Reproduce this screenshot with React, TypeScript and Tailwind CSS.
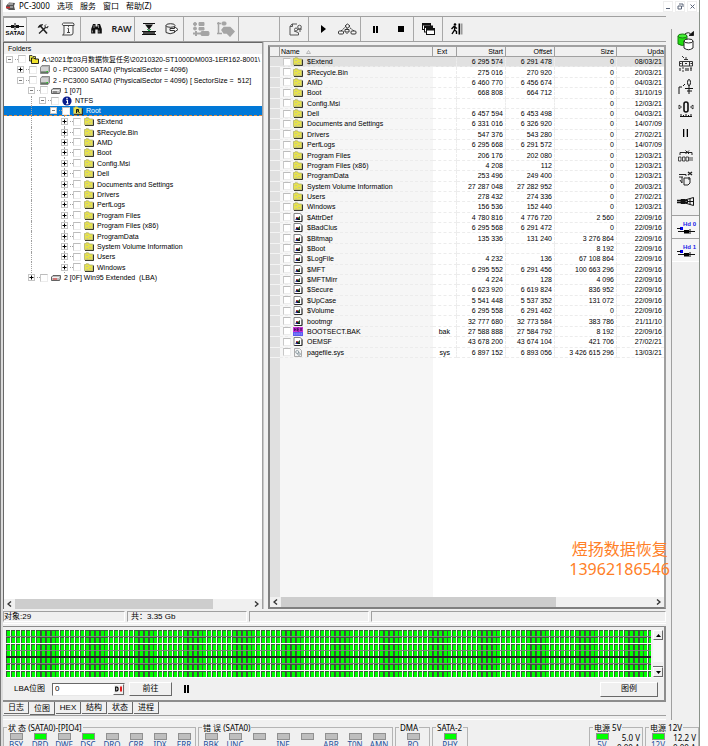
import React from "react";

const UI = "font-['Liberation_Sans','Noto_Sans_CJK_SC',sans-serif]";
const NOTO = "font-['Noto_Sans','Noto_Sans_CJK_SC',sans-serif]";

function FolderIcon({ root = false }: { root?: boolean }) {
  return (
    <svg width="10" height="9" viewBox="0 0 10 9" className="block flex-none">
      <path d="M1 8.500H9.500V2.500" fill="none" stroke="#222" strokeWidth="1" />
      <path d="M.5 7.800V1.500H1.500L2 .8H4.500L5.500 2H8.700V7.800Z" fill="#e6e24e" stroke="#a6a66a" strokeWidth=".7" />
      {root ? (
        <path d="M3.500 7V3.500H5.500V5H3.500M5 5L6.500 7" fill="none" stroke="#111" strokeWidth="1" />
      ) : (
        <path d="M2 3.500H4M5 5.500H7M2.500 6.500H4" stroke="#c9c58a" strokeWidth="1" />
      )}
    </svg>
  );
}

function FoldersIcon() {
  return (
    <svg width="10" height="9" viewBox="0 0 10 9" className="block flex-none">
      <path d="M.5 6V.5H3L4 1.500H6.500V6Z" fill="#e6e24e" stroke="#222" strokeWidth=".8" />
      <path d="M2.500 8.500V3H5L6 4H9.500V8.500Z" fill="#f0e22e" stroke="#111" strokeWidth=".9" />
    </svg>
  );
}

function DriveIcon() {
  return (
    <svg width="10" height="9" viewBox="0 0 10 9" className="block flex-none">
      <path d="M2 .5H9.500V6.500L8 8.500H.5V2.500Z" fill="#b4b4b4" stroke="#666" strokeWidth=".7" />
      <path d="M1 3H8M1 5H8" stroke="#f2f2f2" strokeWidth="1" />
      <path d="M1 7.200H8" stroke="#3c5a3c" strokeWidth="1" />
      <path d="M6.500 6.500h1.500" stroke="#1fd01f" strokeWidth="1" />
    </svg>
  );
}

function VolumeIcon({ red = false }: { red?: boolean }) {
  return (
    <svg width="10" height="9" viewBox="0 0 10 9" className="block flex-none">
      <path d="M2 2.500H9.500V5.500L8.500 7.500H.5V4Z" fill="#bdbdbd" stroke="#444" strokeWidth=".8" />
      <path d="M1 4.500H8" stroke="#fff" strokeWidth=".8" />
      <path d="M2 6H6" stroke={red ? "#e03030" : "#555"} strokeWidth="1" />
    </svg>
  );
}

function InfoIcon() {
  return (
    <svg width="10" height="10" viewBox="0 0 10 10" className="block flex-none">
      <circle cx="5" cy="5" r="4.600" fill="#0a1c8c" />
      <path d="M4 4.300H5.500V7.500M4 7.700H6.500" stroke="#fff" strokeWidth="1.100" fill="none" />
      <rect x="4.300" y="1.800" width="1.400" height="1.300" fill="#fff" />
    </svg>
  );
}

function FileIcon({ kind }: { kind: string }) {
  if (kind === "hex")
    return (
      <svg width="10" height="9" viewBox="0 0 10 9" className="block flex-none">
        <rect width="10" height="5" fill="#c830d8" />
        <rect y="5" width="10" height="4" fill="#5a5af0" />
        <path d="M1.500 1V4M3 1V4M1.500 2.500H3M6 1H4.500V4H6M4.500 2.500H6M7 1L9 4M9 1L7 4" stroke="#3a0850" strokeWidth=".7" fill="none" />
        <path d="M1 7H9" stroke="#b8b8ff" strokeWidth=".8" strokeDasharray="1.500 .7" />
      </svg>
    );
  if (kind === "sys")
    return (
      <svg width="10" height="9" viewBox="0 0 10 9" className="block flex-none">
        <path d="M1.500 .5H6.500L8.500 2.500V8.500H1.500Z" fill="#f4f4f4" stroke="#999" strokeWidth=".8" />
        <circle cx="4.200" cy="4" r="1.500" fill="none" stroke="#8a9aa0" strokeWidth=".9" />
        <circle cx="6" cy="6" r="1.300" fill="none" stroke="#8a9aa0" strokeWidth=".9" />
      </svg>
    );
  return (
    <svg width="10" height="9" viewBox="0 0 10 9" className="block flex-none">
      <path d="M1 .5H7L9 2.200V8.500H1Z" fill="#fff" stroke="#777" strokeWidth=".9" />
      <path d="M9 2.500V8.500H1.500" fill="none" stroke="#222" strokeWidth=".9" />
      <path d="M2.500 6.800L3.500 4L5 5L7 3V7H2.500Z" fill="#111" />
      <rect x="3.500" y="4" width="1.300" height="1.300" fill="#d02020" />
      <rect x="5.500" y="4.500" width="1.300" height="1.300" fill="#20a040" />
      <rect x="3" y="5.700" width="1.300" height="1.200" fill="#2030d0" />
    </svg>
  );
}

type Node = { level: number; text: string; open?: boolean; icon: React.ReactNode; selected?: boolean; rails?: number[] };

const folders = [
  "$Extend", "$Recycle.Bin", "AMD", "Boot", "Config.Msi", "Dell", "Documents and Settings", "Drivers", "PerfLogs",
  "Program Files", "Program Files (x86)", "ProgramData", "System Volume Information", "Users", "Windows",
];

const nodes: Node[] = [
  { level: 0, text: "A:\\2021年03月数据恢复任务\\20210320-ST1000DM003-1ER162-8001\\", open: true, icon: <FoldersIcon /> },
  { level: 1, text: "0 - PC3000 SATA0 (PhysicalSector = 4096)", icon: <DriveIcon /> },
  { level: 1, text: "2 - PC3000 SATA0 (PhysicalSector = 4096) [ SectorSize =  512]", open: true, icon: <DriveIcon /> },
  { level: 2, text: "1 [07]", open: true, icon: <VolumeIcon /> },
  { level: 3, text: "NTFS", open: true, icon: <InfoIcon />, rails: [2] },
  { level: 4, text: "Root", open: true, icon: <FolderIcon root />, selected: true, rails: [2] },
  ...folders.map((text) => ({ level: 5, text, icon: <FolderIcon />, rails: [2, 5] })),
  { level: 2, text: "2 [0F] Win95 Extended  (LBA)", icon: <VolumeIcon red /> },
];

type Row = [string, string, string, string, string, string, string?];
const rows: Row[] = [
  ["$Extend", "", "6 295 574", "6 291 478", "0", "08/03/21"],
  ["$Recycle.Bin", "", "275 016", "270 920", "0", "20/03/21"],
  ["AMD", "", "6 460 770", "6 456 674", "0", "04/03/21"],
  ["Boot", "", "668 808", "664 712", "0", "31/10/19"],
  ["Config.Msi", "", "", "", "0", "12/03/21"],
  ["Dell", "", "6 457 594", "6 453 498", "0", "04/03/21"],
  ["Documents and Settings", "", "6 331 016", "6 326 920", "0", "14/07/09"],
  ["Drivers", "", "547 376", "543 280", "0", "27/02/21"],
  ["PerfLogs", "", "6 295 668", "6 291 572", "0", "14/07/09"],
  ["Program Files", "", "206 176", "202 080", "0", "12/03/21"],
  ["Program Files (x86)", "", "4 208", "112", "0", "12/03/21"],
  ["ProgramData", "", "253 496", "249 400", "0", "12/03/21"],
  ["System Volume Information", "", "27 287 048", "27 282 952", "0", "20/03/21"],
  ["Users", "", "278 432", "274 336", "0", "27/02/21"],
  ["Windows", "", "156 536", "152 440", "0", "12/03/21"],
  ["$AttrDef", "", "4 780 816", "4 776 720", "2 560", "22/09/16", "file"],
  ["$BadClus", "", "6 295 568", "6 291 472", "0", "22/09/16", "file"],
  ["$Bitmap", "", "135 336", "131 240", "3 276 864", "22/09/16", "file"],
  ["$Boot", "", "", "", "8 192", "22/09/16", "file"],
  ["$LogFile", "", "4 232", "136", "67 108 864", "22/09/16", "file"],
  ["$MFT", "", "6 295 552", "6 291 456", "100 663 296", "22/09/16", "file"],
  ["$MFTMirr", "", "4 224", "128", "4 096", "22/09/16", "file"],
  ["$Secure", "", "6 623 920", "6 619 824", "836 952", "22/09/16", "file"],
  ["$UpCase", "", "5 541 448", "5 537 352", "131 072", "22/09/16", "file"],
  ["$Volume", "", "6 295 558", "6 291 462", "0", "22/09/16", "file"],
  ["bootmgr", "", "32 777 680", "32 773 584", "383 786", "21/11/10", "file"],
  ["BOOTSECT.BAK", "bak", "27 588 888", "27 584 792", "8 192", "22/09/16", "hex"],
  ["OEMSF", "", "43 678 200", "43 674 104", "421 706", "27/02/21", "file"],
  ["pagefile.sys", "sys", "6 897 152", "6 893 056", "3 426 615 296", "13/03/21", "sys"],
];

function Tick({ label }: { label: string }) {
  return (
    <input
      type="checkbox"
      aria-label={label}
      className="m-0 block h-2 w-2 flex-none appearance-none border border-[#ececec] border-t-[#bcbcbc] border-l-[#c8c8c8] bg-white"
    />
  );
}

function TreeRow({ node }: { node: Node }) {
  const cells = Array.from({ length: node.level }, (_, i) => i);
  return (
    <li
      className={
        "flex min-h-0 items-center whitespace-pre " +
        (node.selected ? "border-b border-dashed border-[#e08a3c] bg-[#0078d7] text-white" : "text-black")
      }
    >
      {cells.map((i) => (
        <span key={i} className="flex w-[11px] flex-none justify-center self-stretch">
          {node.rails?.includes(i) && <span className="border-l border-dotted border-[#a0a0a0]" />}
        </span>
      ))}
      <button
        aria-label={(node.open ? "Collapse " : "Expand ") + node.text}
        className="relative flex w-[11px] flex-none items-center justify-center self-stretch"
      >
        {node.level === 5 && <span className="absolute inset-y-0 left-[5px] border-l border-dotted border-[#a0a0a0]" />}
        <svg width="7" height="7" viewBox="0 0 7 7" className="relative block">
          <rect x=".5" y=".5" width="6" height="6" fill="#fff" stroke="#c4c4c4" />
          <path d={node.open ? "M2 3.500H5" : "M1.500 3.500H5.500M3.500 1.500V5.500"} stroke={node.open ? "#777" : "#000"} />
        </svg>
      </button>
      <span className="w-[3px] flex-none border-t border-dotted border-[#a0a0a0]" />
      <Tick label={node.text} />
      <span className="ml-[3px] flex w-[10px] flex-none justify-center">{node.icon}</span>
      <span className="ml-[3px]">{node.text}</span>
    </li>
  );
}

function ToolButton({ label, children, className = "" }: { label: string; children: React.ReactNode; className?: string }) {
  return (
    <button aria-label={label} className={"flex flex-1 items-center justify-center " + className}>
      {children}
    </button>
  );
}

function Chevron({ left = false }: { left?: boolean }) {
  return (
    <button aria-label={left ? "Scroll left" : "Scroll right"} className="flex w-[11px] flex-none items-center justify-center">
      <svg width="5" height="6" viewBox="0 0 5 6">
        <path d={left ? "M4 .5L1 3L4 5.500" : "M1 .5L4 3L1 5.500"} fill="none" stroke="#333" strokeWidth="1.400" />
      </svg>
    </button>
  );
}

function Toolbar() {
  const group = "flex flex-none border-r border-[#a8a8a8]";
  return (
    <div role="toolbar" className="mt-1 flex h-[26px] flex-none border-y border-[#a0a0a0] bg-[#f0f0f0]">
      <div className={group + " w-6"}>
        <ToolButton label="SATA0" className="flex-col border-t border-l border-[#a0a0a0] bg-[#f7f7f7]">
          <svg width="18" height="7" viewBox="0 0 18 7">
            <path d="M0 3.500H18" stroke="#111" />
            <path d="M5 2H8V5H5ZM10 2H13V5H10Z" fill="#111" />
            <path d="M9 0V7" stroke="#111" />
          </svg>
          <span className="text-[6px] leading-[7px] font-bold">SATA0</span>
        </ToolButton>
      </div>
      <div className={group + " w-[54px] pl-1"}>
        <ToolButton label="Tools">
          <svg width="12" height="12" viewBox="0 0 12 12" fill="none" stroke="#222">
            <path d="M3 2.500L10 10.500" strokeWidth="1.600" />
            <path d="M1 4.500Q2 1 6 1.500L3 4Z" fill="#222" strokeWidth=".6" />
            <path d="M2 10.500L8.500 4.500" strokeWidth="1.200" />
            <path d="M8 2.500L8.300 4.500L10.500 4.800L11 3M8 2.500L9 1.500" />
          </svg>
        </ToolButton>
        <ToolButton label="Information">
          <svg width="14" height="14" viewBox="0 0 14 14" fill="none" stroke="#444">
            <path d="M3 3.500V11Q3 13 1.500 13H10Q12 13 12 11V3.500" fill="#f8f8f8" />
            <path d="M2.500 1H12Q13.500 1.500 13 3.500H2Q0 2 2.500 1Z" fill="#f8f8f8" />
            <path d="M6.500 6.500H7.500V10.500M6 10.500H9M7 4.700H8" />
          </svg>
        </ToolButton>
      </div>
      <div className={group + " w-[54px] pl-[3px]"}>
        <ToolButton label="Find">
          <svg width="11" height="10" viewBox="0 0 11 10" fill="#111">
            <path d="M2 0H4.500V2.500H6.500V0H9L10.800 5V9.500H6.700V5.500H4.300V9.500H.2V5Z" />
            <path d="M1.500 6.500V8.500M8 6.500V8.500M3 1V4M7.500 1V4" stroke="#bbb" strokeWidth=".7" />
          </svg>
        </ToolButton>
        <ToolButton label="RAW">
          <span className={"text-[9px] leading-3 font-semibold text-[#222] " + NOTO}>RAW</span>
        </ToolButton>
      </div>
      <div className={group + " w-[49px] pl-[2px]"}>
        <ToolButton label="Filter">
          <svg width="14" height="13" viewBox="0 0 14 13">
            <path d="M1 .5H13M0 11.500H14M0 8.500H14" stroke="#111" />
            <path d="M3 1.500H11L7.500 6V8H6.500V6Z" fill="#111" />
            <path d="M5 6L7 8L9 6" stroke="#22b14c" fill="none" />
            <path d="M1 10H13" stroke="#111" strokeWidth="1.500" />
          </svg>
        </ToolButton>
        <ToolButton label="Export">
          <svg width="14" height="12" viewBox="0 0 14 12" fill="none" stroke="#333">
            <path d="M1 2.500V9.500Q5 12 9.500 9.500V8" />
            <ellipse cx="5.500" cy="2.500" rx="4.500" ry="1.800" />
            <path d="M5 5.500H9.500V3.500L13 6.500L9.500 9V7.500H5Z" fill="#fafafa" />
          </svg>
        </ToolButton>
      </div>
      <div className={group + " w-[55px] pl-1"}>
        <ToolButton label="Map list">
          <svg width="18" height="16" viewBox="0 0 18 16" fill="#a5a5a5" stroke="#a5a5a5">
            <circle cx="3" cy="3" r="1.500" /><circle cx="3" cy="7.500" r="1.500" />
            <path d="M7 1.500H12V4.500H7ZM7 6.500H12V9H7Z" />
            <path d="M1 12.500H9M4 10V15" strokeWidth="2" />
            <rect x="9" y="10.500" width="8" height="4" rx="1" />
          </svg>
        </ToolButton>
        <ToolButton label="Map tree">
          <svg width="19" height="16" viewBox="0 0 19 16" fill="#a5a5a5" stroke="#a5a5a5">
            <path d="M2.500 1V13M1 2.500H5M1 12.500H6" strokeWidth="1.500" />
            <rect x="6" y="1" width="4" height="3" rx="1" />
            <path d="M8 6.500H14L18 10.500L14 15L11 12H8L6 9Z" strokeWidth="1.500" />
          </svg>
        </ToolButton>
      </div>
      <div className={group + " w-[41px]"} />
      <div className={group + " w-[29px] pl-1"}>
        <ToolButton label="Edit task">
          <svg width="14" height="13" viewBox="0 0 14 13" fill="none" stroke="#555">
            <path d="M8 1H3L1 3.500V12H9.500V9.500M3.500 1V3.500H1" />
            <circle cx="7" cy="6.500" r="1.500" /><circle cx="10.500" cy="4" r="1.800" />
            <path d="M5 8L9 9.500M8 6.500L13 6M11 6V9" />
          </svg>
        </ToolButton>
      </div>
      <div className={group + " w-[52px] pl-[2px]"}>
        <ToolButton label="Start">
          <svg width="5" height="8" viewBox="0 0 5 8"><path d="M0 0L5 4L0 8Z" fill="#000" /></svg>
        </ToolButton>
        <ToolButton label="Steps">
          <svg width="19" height="12" viewBox="0 0 19 12" fill="#f8f8f8" stroke="#333">
            <path d="M3 8L9 2.500L16 8M9 1V11" fill="none" strokeDasharray="2 1" />
            <path d="M7 3L9.500 1L12 3L9.500 5Z" />
            <rect x=".5" y="8" width="5" height="3" rx="1" /><path d="M7 6.500H11V9H7Z" /><rect x="13" y="8" width="5" height="3" rx="1" />
          </svg>
        </ToolButton>
      </div>
      <div className={group + " w-[53px] pl-[2px]"}>
        <ToolButton label="Pause">
          <svg width="5" height="7" viewBox="0 0 5 7"><path d="M0 0H2V7H0ZM3 0H5V7H3Z" fill="#000" /></svg>
        </ToolButton>
        <ToolButton label="Stop">
          <svg width="6" height="6" viewBox="0 0 6 6"><path d="M0 0H6V6H0Z" fill="#000" /></svg>
        </ToolButton>
      </div>
      <div className={group + " w-[29px]"}>
        <ToolButton label="Windows">
          <svg width="13" height="12" viewBox="0 0 13 12" fill="#fff" stroke="#111">
            <rect x=".5" y=".5" width="8" height="6" /><path d="M.5 1.500H8.500" strokeWidth="2" />
            <rect x="2.500" y="3" width="8" height="6" /><path d="M2.500 4H10.500" strokeWidth="2" />
            <rect x="4.500" y="5.500" width="8" height="6" /><path d="M4.500 6.500H12.500" strokeWidth="2" />
          </svg>
        </ToolButton>
      </div>
      <div className="flex w-[27px] flex-none">
        <ToolButton label="Exit">
          <svg width="12" height="12" viewBox="0 0 12 12">
            <circle cx="4" cy="1.500" r="1.300" fill="#000" />
            <path d="M4 3L3.500 7L1 11M3.500 7L5.500 8.500V11M.5 6L3 3.500L6 5.500" fill="none" stroke="#000" strokeWidth="1.400" />
            <path d="M7.500 .5H9V11.500H7.500Z" fill="#000" /><path d="M9.500 .5H11.500V11.500H9.500Z" fill="#999" />
          </svg>
        </ToolButton>
      </div>
    </div>
  );
}

function FolderPanel() {
  return (
    <section className="flex w-[260px] flex-none flex-col border-t border-r border-l border-[#696969] border-r-[#a0a0a0] bg-white">
      <h2 className="h-[11px] flex-none bg-[#f0f0f0] pl-1 text-[7px] leading-[11px]">Folders</h2>
      <ul className="grid h-[229px] flex-none auto-rows-fr overflow-hidden text-[7px] leading-[9px]">
        {nodes.map((n, i) => <TreeRow key={i} node={n} />)}
      </ul>
      <div className="flex-1" />
      <div className="flex h-[10px] flex-none bg-[#f0f0f0]">
        <Chevron left />
        <span className="flex flex-1"><span className="w-[84%] bg-[#cdcdcd]" /></span>
        <Chevron />
      </div>
    </section>
  );
}

function FileTable() {
  const head = "border-r border-b border-[#a0a0a0] p-0 pr-[2px] text-right font-normal";
  const cell = "border-r border-b border-dashed border-[#ececec] p-0 pr-[2px] text-right";
  return (
    <section className="mt-[3px] flex min-w-0 flex-1 flex-col border-2 border-[#a0a0a0] border-l-[#808080] border-b-[#808080] bg-white">
      <div className="flex min-h-0 flex-1 flex-col overflow-hidden">
        <table className="h-[311px] w-full flex-none table-fixed border-separate border-spacing-0 text-[7px] leading-[9px] whitespace-nowrap">
          <colgroup>
            <col className="w-[10px]" /><col /><col className="w-6" /><col className="w-[49px]" />
            <col className="w-[49px]" /><col className="w-[62px]" /><col className="w-[47px]" />
          </colgroup>
          <thead className="bg-[#f0f0f0]">
            <tr>
              <td className="border-r border-b border-[#a0a0a0] p-0" />
              <th className="border-r border-b border-[#a0a0a0] p-0 pl-[1px] text-left font-normal">
                <span className="flex items-center gap-[6px]">
                  Name
                  <svg width="5" height="4" viewBox="0 0 5 4"><path d="M.5 3.500L2.500 .5L4.500 3.500Z" fill="none" stroke="#a8a8a8" strokeWidth=".8" /></svg>
                </span>
              </th>
              <th className="border-r border-b border-[#a0a0a0] p-0 pl-1 text-left font-normal">Ext</th>
              <th className={head}>Start</th><th className={head}>Offset</th>
              <th className={head}>Size</th><th className="border-b border-[#a0a0a0] p-0 text-right font-normal">Upda</th>
            </tr>
          </thead>
          <tbody>
            {rows.map((r, i) => (
              <tr key={r[0]} className={i === 0 ? "bg-[#e1e1e1]" : ""}>
                <td className="border-b border-[#f4f4f4] bg-[#e0e0e0] p-0" />
                <td className={"border-b border-dashed border-[#ececec] p-0 " + (i === 0 ? "" : "bg-[#f6f6f6]")}>
                  <span className="flex h-[9px] items-center pl-[3px]">
                    <Tick label={r[0]} />
                    <span className="ml-[2px]">{r[6] ? <FileIcon kind={r[6]} /> : <FolderIcon />}</span>
                    <span className="ml-1">{r[0]}</span>
                  </span>
                </td>
                <td className={cell + " pr-[6px]"}>{r[1]}</td>
                <td className={cell}>{r[2]}</td>
                <td className={cell}>{r[3]}</td>
                <td className={cell}>{r[4]}</td>
                <td className="border-b border-dashed border-[#ececec] p-0 pr-[2px] text-right">{r[5]}</td>
              </tr>
            ))}
          </tbody>
        </table>
        <div className="flex flex-1">
          <span className="w-[10px] flex-none bg-[#e0e0e0]" />
          <span className="flex-1 bg-[#f6f6f6]" />
          <span className="w-[231px] flex-none" />
        </div>
      </div>
      <div className="flex h-[10px] flex-none bg-[#f0f0f0]">
        <Chevron left />
        <span className="flex flex-1"><span className="w-[74%] bg-[#cdcdcd]" /></span>
        <Chevron />
      </div>
    </section>
  );
}

function SectorMap() {
  const xs = [0, 5, 10, 15, 20, 25, 30, 35, 40, 45];
  const ys = [0, 7, 14, 20, 27, 34, 41];
  return (
    <svg className="block h-[47px] min-w-0 flex-1" role="img" aria-label="LBA map">
      <defs>
        <pattern id="sectors" width="49" height="47" patternUnits="userSpaceOnUse">
          <rect width="49" height="47" fill="#f4f4f4" />
          <rect x="33" width="16" height="47" fill="#444" />
          {xs.map((x) => ys.map((y) => (
            <g key={x + "-" + y}>
              <rect x={x} y={y} width="4" height="6" fill="#3c5a3c" />
              <rect x={x + 1} y={y + 1} width="3" height="5" fill="#00ff00" />
            </g>
          )))}
          <path d="M0 6.500H49M0 20.500H49M0 33.500H49" stroke="#808080" />
          <path d="M0 13.500H49M0 40.500H49" stroke="#fff" />
          <path d="M0 27H49" stroke="#222" strokeWidth="2" />
        </pattern>
      </defs>
      <rect width="100%" height="47" fill="url(#sectors)" />
    </svg>
  );
}

function MapPanel() {
  const raised = "border border-white border-r-[#696969] border-b-[#696969] bg-[#f0f0f0]";
  return (
    <section className="mt-[2px] flex h-[76px] flex-none flex-col border-t border-r-2 border-b-2 border-[#8c8c8c] pt-[3px] pl-[3px]">
      <div className="flex pr-[1px]">
        <div className="flex min-w-0 flex-1 border-b border-white"><SectorMap /></div>
        <div className="ml-[2px] flex w-[10px] flex-none flex-col bg-[#f8f8f8]">
          <button aria-label="Scroll up" className={"flex h-[10px] items-center justify-center " + raised}>
            <svg width="5" height="3" viewBox="0 0 5 3"><path d="M0 3L2.500 0L5 3Z" /></svg>
          </button>
          <span className="mt-[22px] h-[5px] border-b border-[#696969] bg-[#f0f0f0]" />
          <button aria-label="Scroll down" className={"flex h-[10px] items-center justify-center " + raised}>
            <svg width="5" height="3" viewBox="0 0 5 3"><path d="M0 0L2.500 3L5 0Z" /></svg>
          </button>
        </div>
      </div>
      <div className="flex flex-1 items-center pl-2 text-[8px] leading-[10px]">
        <label htmlFor="lba" className="w-[38px]">LBA位图</label>
        <span className="flex h-[13px] w-[73px] border border-[#696969] border-r-[#e8e8e8] border-b-[#e8e8e8] bg-white">
          <input id="lba" defaultValue="0" className="min-w-0 flex-1 pl-[2px] outline-none" />
          <button aria-label="Number base" className={"flex w-[11px] items-center justify-center " + raised}>
            <svg width="7" height="6" viewBox="0 0 7 6">
              <path d="M.7 1V5H2L3 4V2L2 1Z" fill="none" stroke="#000" strokeWidth="1.200" /><path d="M5 .5H7V5.500H5Z" fill="#e02020" />
            </svg>
          </button>
        </span>
        <button className={"ml-1 h-[14px] w-[43px] " + raised}>前往</button>
        <button aria-label="Pause map" className="ml-3 flex">
          <svg width="5" height="8" viewBox="0 0 5 8"><path d="M0 0H2V8H0ZM3 0H5V8H3Z" /></svg>
        </button>
        <button className={"mr-[6px] ml-auto h-[15px] w-[58px] " + raised}>图例</button>
      </div>
    </section>
  );
}

const sideIcons: [string, React.ReactNode][] = [
  ["Copy disk", (
    <svg key="a" width="18" height="20" viewBox="0 0 18 20" stroke="#222">
      <path d="M1 5V13Q5 16 10 13V5" fill="#22dd11" stroke="#167a10" /><ellipse cx="5.500" cy="5" rx="4.500" ry="2" fill="#44ee33" stroke="#167a10" />
      <path d="M7 10V17Q11.500 20.500 16 17V10" fill="#fff" /><ellipse cx="11.500" cy="10" rx="4.500" ry="2" fill="#fff" />
      <path d="M8 3Q12 0 14.500 4" fill="none" /><path d="M12 4.500H16.500V.5Z" fill="#111" />
    </svg>
  )],
  ["Reset", (
    <svg key="b" width="14" height="17" viewBox="0 0 14 17" fill="none" stroke="#333">
      <path d="M3 1L5 3M7 2V5M5 4.500H9" /><path d="M.5 6.500H13.500V11H.5ZM3.500 6V11M6 8.500H8M10.500 6V11M1 8.500H2.500M11.500 8.500H13" />
      <path d="M1 13V16M3 13H5M3 16H5M7 13V16M9 13V16M11 13H13M12 13V16" strokeWidth="1.200" />
    </svg>
  )],
  ["Power", (
    <svg key="c" width="15" height="16" viewBox="0 0 15 16" fill="none" stroke="#111">
      <path d="M1 15V8H4M5 7L7 5M7 9.500H15M9 12H14M11 6V15" /><ellipse cx="11" cy="3.500" rx="1.500" ry="3" />
    </svg>
  )],
  ["Measure", (
    <svg key="d" width="16" height="17" viewBox="0 0 16 17" fill="none" stroke="#111">
      <rect x="6" y="1" width="4" height="10" rx="2" strokeWidth="1.600" /><path d="M1 4L3.500 6L1 8ZM15 4L12.500 6L15 8Z" strokeWidth=".8" />
      <path d="M2 15.500H14M3 13V16M5.500 14V16M8 13V16M10.500 14V16M13 13V16" />
    </svg>
  )],
  ["Pause", <svg key="e" width="5" height="8" viewBox="0 0 5 8"><path d="M0 0H1.300V8H0ZM3.700 0H5V8H3.700Z" /></svg>],
  ["Skip sectors", (
    <svg key="f" width="15" height="13" viewBox="0 0 15 13" fill="none" stroke="#222">
      <path d="M2 6V3.500H14V6M7.500 1.500L11 5M11 1.500L7.500 5" /><path d="M.5 8H3V12H.5ZM4.500 8H7V12H4.500ZM8 8H10.500V12H8ZM12 8V12M14 8V12" strokeWidth=".8" />
    </svg>
  )],
  ["Cancel queue", (
    <svg key="g" width="15" height="15" viewBox="0 0 15 15" fill="none" stroke="#222">
      <path d="M10 1L14 4M14 1L10 4" strokeWidth="1.400" /><path d="M1 3.500H8V5M1 6H5M4 6V12M6 7H12V12L10 14H6ZM11 6V9M2 9L4 12" />
    </svg>
  )],
  ["Connector", (
    <svg key="h" width="17" height="9" viewBox="0 0 17 9" fill="none" stroke="#111">
      <path d="M0 3.500H11M0 5.500H11" strokeWidth="1.500" /><path d="M4 2.500H8V6.500H4Z" fill="#111" />
      <path d="M8 3L16.500 .5V8.500L8 6M10 4.500H16M13 1.500V7.500" />
    </svg>
  )],
];

function Sidebar() {
  return (
    <nav className="mt-[17px] mb-1 flex w-7 flex-none flex-col border-l border-[#a0a0a0] bg-[#f0f0f0]">
      {sideIcons.map(([label, icon]) => (
        <button key={label} aria-label={label} className="flex h-[23px] flex-none items-center justify-center">{icon}</button>
      ))}
      <div className="mt-[2px] flex flex-col border-b border-white">
        {["Hd 0", "Hd 1"].map((t) => (
          <button key={t} className="flex h-[23px] flex-col items-center justify-center border-t border-[#a0a0a0] bg-[#f5f5f5]">
            <span className="self-end pr-[3px] text-[6px] leading-[6px] font-bold text-[#2020e8]">{t}</span>
            <svg width="18" height="7" viewBox="0 0 18 7">
              <path d="M3 0H6V3H3Z" fill="#0000f0" /><path d="M0 1.500H4M1 4.500H18" stroke="#111" /><path d="M7 3H12V6.500H7Z" fill="#000" /><path d="M13 2V7" stroke="#111" />
            </svg>
          </button>
        ))}
      </div>
    </nav>
  );
}

function Lamp({ label, on = false }: { label: string; on?: boolean }) {
  return (
    <span className="flex w-6 flex-none flex-col items-center">
      <span className={"h-[7px] w-[13px] border border-[#909090] " + (on ? "bg-[#00ff00]" : "bg-[#bebebe]")} />
      <span className="h-[10px] text-[8px] leading-[10px] text-[#1c4f9c]">{label}</span>
    </span>
  );
}

function LampGroup({ title, width, children }: { title: string; width: string; children: React.ReactNode }) {
  return (
    <fieldset className={"h-[27px] min-w-0 flex-none border border-[#b4b4b4] px-0 " + width}>
      <legend className="ml-[3px] h-[7px] px-[1px] text-[8px] leading-[7px] whitespace-nowrap">{title}</legend>
      <div className="flex pt-[2px]">{children}</div>
    </fieldset>
  );
}

export default function App() {
  const tabs = ["日志", "位图", "HEX", "结构", "状态", "进程"];
  return (
    <div className={"flex h-screen overflow-hidden bg-white text-black " + UI}>
      <div className="w-[3px] flex-none border-l border-[#777] bg-[#dcdcdc]" />
      <main className="relative flex min-w-0 flex-1 flex-col bg-[#f0f0f0]">
        <header className={"flex h-3 flex-none items-center bg-white text-[8px] leading-3 " + NOTO}>
          <svg width="11" height="9" viewBox="0 0 11 9" className="ml-[2px]">
            <path d="M1 4L4 .5L10 1L9 4L10 8H4L1 6Z" fill="#555" /><path d="M3 2H8M5 5H8" stroke="#ddd" /><path d="M1 5.500H5" stroke="#d03030" strokeWidth="1.500" />
          </svg>
          <span className="ml-[3px] w-[38px]">PC-3000</span>
          <nav className="flex gap-[7px]">
            {["选项", "服务", "窗口", "帮助(Z)"].map((m) => <button key={m}>{m}</button>)}
          </nav>
          <div className="ml-auto flex items-center gap-[2px] pr-[2px]">
            {["M1 5.500H5", "M2 1H6V4M1 3H4.500V6H1Z", "M1.500 1.500L5.500 5.500M5.500 1.500L1.500 5.500"].map((d, i) => (
              <button key={d} aria-label={["Minimize", "Restore", "Close"][i]} className="flex h-[11px] w-[10px] items-center justify-center border border-[#eeeeee]">
                <svg width="7" height="7" viewBox="0 0 7 7"><path d={d} fill="none" stroke="#5a6478" /></svg>
              </button>
            ))}
          </div>
        </header>

        <div className="flex min-h-0 flex-1">
          <div className="flex min-w-0 flex-1 flex-col">
            <Toolbar />
            <div className="flex min-h-0 flex-1">
              <FolderPanel />
              <div className="w-[5px] flex-none border-l border-[#c8c8c8]" />
              <FileTable />
            </div>
            <div className="mt-[2px] flex h-[11px] flex-none gap-[2px] text-[8px] leading-[9px]">
              {["对象:29", "共：3.35 Gb", "", ""].map((t, i) => (
                <span
                  key={i}
                  className={
                    "border border-[#a0a0a0] border-r-white border-b-white " +
                    (i === 3 ? "flex-1" : i === 0 ? "w-[122px]" : "w-[120px] pl-[3px]")
                  }
                >
                  {t}
                </span>
              ))}
            </div>
            <div className="mt-[1px] h-px flex-none bg-white" />
            <MapPanel />
            <div role="tablist" className="flex h-[13px] flex-none gap-[1px] pl-[1px] text-[8px] leading-[10px]">
              {tabs.map((t, i) => (
                <button
                  role="tab"
                  aria-selected={i === 1}
                  key={t}
                  className={
                    "flex w-[25px] items-center justify-center border-r border-[#696969] " +
                    (i === 1 ? "h-[13px] border-b pt-[2px]" : "h-[12px] border-b")
                  }
                >
                  {t}
                </button>
              ))}
            </div>
            <div className="h-[5px] flex-none border-y border-[#a0a0a0] border-b-white" />
            <div className="h-1 flex-none" />
          </div>
          <div className="w-[5px] flex-none" />
          <Sidebar />
        </div>

        <footer className={"flex h-[22px] flex-none gap-[2px] overflow-hidden " + NOTO}>
          <LampGroup title="状 态 (SATA0)-[PIO4]" width="w-[193px]">
            {["BSY", "DRD", "DWF", "DSC", "DRQ", "CRR", "IDX", "ERR"].map((l) => (
              <Lamp key={l} label={l} on={l === "DRD" || l === "DSC"} />
            ))}
          </LampGroup>
          <LampGroup title="错 误 (SATA0)" width="w-[195px]">
            {["BBK", "UNC", "", "INF", "", "ABR", "T0N", "AMN"].map((l, i) => <Lamp key={i} label={l} />)}
          </LampGroup>
          <LampGroup title="DMA" width="w-[35px]"><span className="w-[5px]" /><Lamp label="RQ" /></LampGroup>
          <LampGroup title="SATA-2" width="w-[36px]"><span className="w-[5px]" /><Lamp label="PHY" on /></LampGroup>
          <span className="flex-1" />
          {[["5V", "5.0 V", "0.00 A"], ["12V", "12.2 V", "0.00 A"]].map(([v, volts, amps]) => (
            <LampGroup key={v} title={"电源 " + v} width="w-[54px]">
              <Lamp label={v} on />
              <span className="flex flex-1 flex-col pr-[2px] text-right text-[8px] leading-[10px] whitespace-nowrap">
                <span>{volts}</span><span>{amps}</span>
              </span>
            </LampGroup>
          ))}
        </footer>

        <div className={"pointer-events-none absolute right-[29px] bottom-[167px] text-center text-[16px] leading-5 text-[#ff7f27] " + NOTO}>
          <div>煜扬数据恢复</div>
          <div>13962186546</div>
        </div>
      </main>
      <div className="w-[9px] flex-none border-l border-[#8a928a]" />
    </div>
  );
}
